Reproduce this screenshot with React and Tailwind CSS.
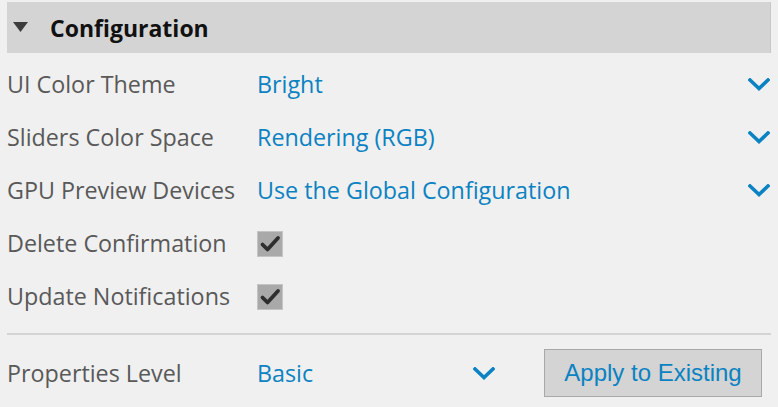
import React from "react";

const Chevron = ({ className = "" }) => (
  <svg width="22" height="13" viewBox="0 0 22 13" className={className}>
    <path d="M2 2 L11 10.5 L20 2" fill="none" stroke="#0b82c2" strokeWidth="3.6" strokeLinecap="square" />
  </svg>
);

const Check = () => (
  <div className="w-[26px] h-[26px] bg-[#a9a9a9] border border-[#c4c4c4] flex items-center justify-center">
    <svg width="22" height="18" viewBox="0 0 22 18">
      <path d="M3.5 9.5 L8.5 14.5 L19 3" fill="none" stroke="#2e2e2e" strokeWidth="3.8" strokeLinecap="round" strokeLinejoin="round" />
    </svg>
  </div>
);

const SelectRow = ({ label, value }) => (
  <div className="h-[53px] flex items-center">
    <div className="w-[250px] text-[#595959] -mt-[2px]">{label}</div>
    <div className="flex-1 text-[#0b82c2] -mt-[2px]">{value}</div>
    <Chevron className="mr-[1px]" />
  </div>
);

const CheckRow = ({ label }) => (
  <div className="h-[53px] flex items-center">
    <div className="w-[250px] text-[#595959] -mt-[2px]">{label}</div>
    <Check />
  </div>
);

export default function App() {
  return (
    <div
      className="w-[778px] h-[407px] bg-[#f0f0f0] pt-[2px] px-[7px] text-[23.3px] leading-[32px] overflow-hidden"
      style={{ fontFamily: '"Open Sans", "Noto Sans", sans-serif' }}
    >
      <div className="w-[764px]">
        <div className="h-[51px] bg-[#d4d4d4] border-r border-[#c8c8c8] flex items-center">
          <svg width="16" height="11" viewBox="0 0 16 11" className="ml-[6px] mr-[21px]">
            <path d="M0 0 H15 L7.5 10 Z" fill="#3c3c3c" />
          </svg>
          <span className="font-bold text-[#111] text-[23px]">Configuration</span>
        </div>
        <div className="pt-[5px]">
          <SelectRow label="UI Color Theme" value="Bright" />
          <SelectRow label="Sliders Color Space" value="Rendering (RGB)" />
          <SelectRow label="GPU Preview Devices" value="Use the Global Configuration" />
          <CheckRow label="Delete Confirmation" />
          <CheckRow label="Update Notifications" />
        </div>
        <div className="mt-[10px] h-[2px] bg-[#d4d4d4]" />
        <div className="pt-[14px] flex items-center">
          <div className="w-[250px] text-[#595959]">Properties Level</div>
          <div className="w-[216px] text-[#0b82c2]">Basic</div>
          <Chevron />
          <div className="w-[49px]" />
          <button
            className="w-[218px] h-[48px] bg-[#d4d4d4] border border-[#a8a8a8] text-[#0b82c2] text-[24px] flex items-center justify-center"
            style={{ fontFamily: '"Liberation Sans", Arial, sans-serif' }}
          >
            Apply to Existing
          </button>
        </div>
      </div>
    </div>
  );
}
